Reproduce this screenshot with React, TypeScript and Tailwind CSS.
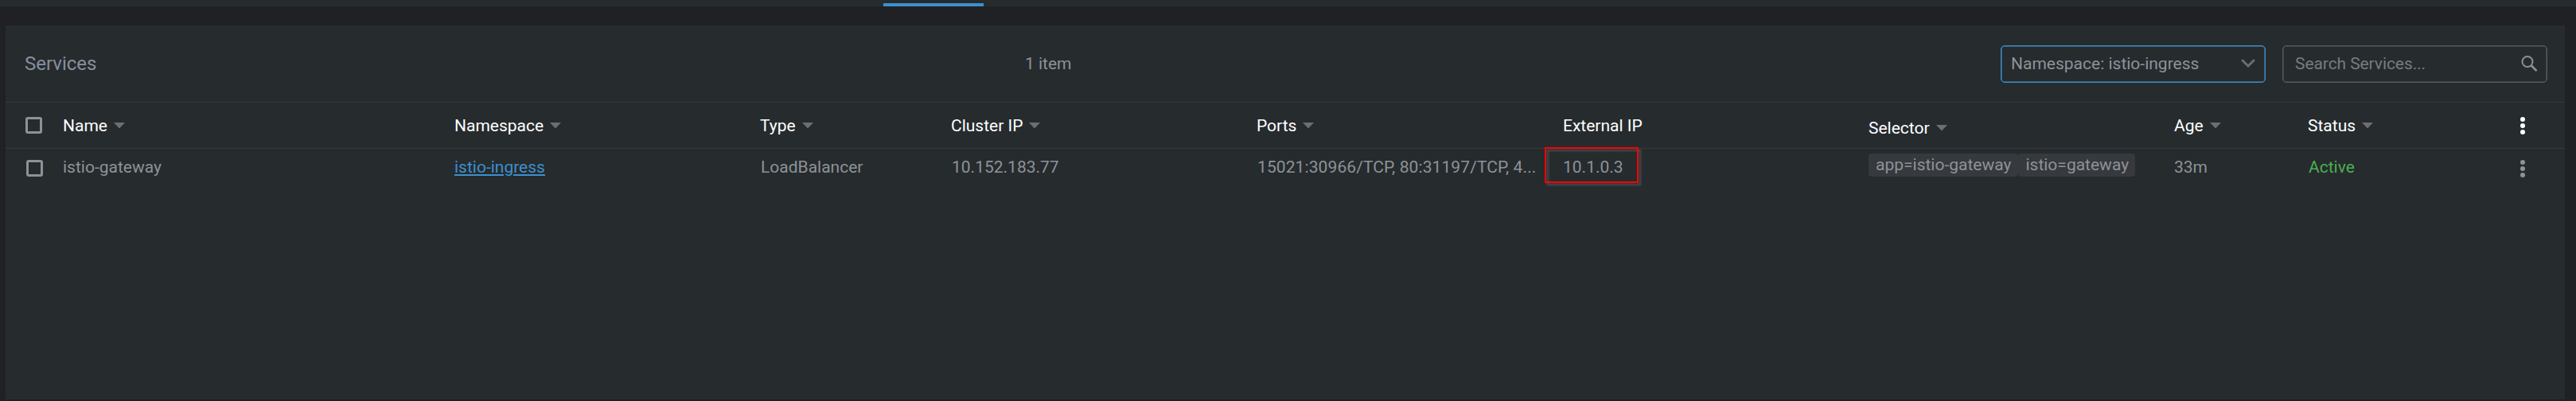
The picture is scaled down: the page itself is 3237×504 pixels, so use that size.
import React from "react";

const Caret = () => (
  <svg width="14" height="8" viewBox="0 0 14 8" className="shrink-0">
    <path d="M0 0h14L7 7.5z" fill="#6b6f72" />
  </svg>
);

const Box = ({ className = "" }: { className?: string }) => (
  <span className={`block h-[21px] w-[21px] shrink-0 rounded-[3px] border-[3px] border-[#8e9297] ${className}`} />
);

const Kebab = ({ fill }: { fill: string }) => (
  <svg width="6" height="24" viewBox="0 0 6 24" fill={fill} className="shrink-0">
    <circle cx="3" cy="4" r="3" />
    <circle cx="3" cy="12" r="3" />
    <circle cx="3" cy="20" r="3" />
  </svg>
);

const cols =
  "grid grid-cols-[72px_492px_384px_240px_384px_385px_384px_384px_168px_267px_49px]";

const Head = ({ label, caret = true, className = "" }: { label: string; caret?: boolean; className?: string }) => (
  <div className={`flex items-center gap-[8px] whitespace-nowrap text-white ${className}`}>
    <span>{label}</span>
    {caret && <Caret />}
  </div>
);

export default function App() {
  return (
    <div className="flex h-[504px] w-[3237px] flex-col overflow-hidden bg-[#202124] font-['Roboto',sans-serif] text-[21px] leading-[28px] text-[#8e9297]">
      <div className="flex h-[8px] items-end bg-[#262b2e] pl-[1110px]">
        <div className="h-[4px] w-[126px] bg-[#3d90ce]" />
      </div>
      <main className="ml-[7px] mt-[24px] flex h-[470px] w-[3216px] flex-col bg-[#262b2e]">
        <header className="flex h-[96px] items-center pr-[22px]">
          <h1 className="w-[1281px] pl-[24px] text-[24px] text-[#87909c]">Services</h1>
          <span>1 item</span>
          <div className="ml-auto flex gap-[21px]">
            <div className="flex h-[47px] w-[333px] items-center justify-between rounded-[5px] border-[1px] border-[#3d90ce] pl-[12px] pr-[12px] shadow-[inset_0_0_0_0.5px_#3d90ce]">
              <span>Namespace: istio-ingress</span>
              <svg width="18" height="12" viewBox="0 0 18 12" fill="none" stroke="#6b6f72" strokeWidth="3" strokeLinecap="round">
                <path d="M2 2l7 7 7-7" />
              </svg>
            </div>
            <div className="flex h-[47px] w-[333px] items-center justify-between rounded-[5px] border-[1px] border-[#555b65] pl-[15px] pr-[11px] shadow-[inset_0_0_0_0.5px_#555b65]">
              <span className="tracking-[-0.08px] text-[#777b80]">Search Services...</span>
              <svg width="21" height="21" viewBox="0 0 21 21" fill="none" stroke="#8e9297" strokeWidth="2">
                <circle cx="8" cy="7.5" r="6.5" />
                <path d="M12.5 12l7 7.2" strokeWidth="2.6" />
              </svg>
            </div>
          </div>
        </header>
        <div className={`${cols} h-[58px] items-center border-t border-[#36393e]`}>
          <Box className="ml-[25px]" />
          <Head label="Name" />
          <Head label="Namespace" />
          <Head label="Type" />
          <Head label="Cluster IP" />
          <Head label="Ports" />
          <Head label="External IP" caret={false} />
          <Head label="Selector" className="pt-[6px]" />
          <Head label="Age" />
          <Head label="Status" />
          <Kebab fill="#ffffff" />
        </div>
        <div className={`${cols} h-[50px] items-center border-t border-[#36393e]`}>
          <Box className="ml-[26px]" />
          <div className="pb-[4px]">istio-gateway</div>
          <div className="pb-[4px] text-[#3d90ce] underline">istio-ingress</div>
          <div className="pb-[4px] pl-px">LoadBalancer</div>
          <div className="pb-[4px] pl-px">10.152.183.77</div>
          <div className="whitespace-nowrap pb-[4px] pl-px tracking-[0.1px]">15021:30966/TCP, 80:31197/TCP, 4...</div>
          <div className="relative pb-[4px]">
            10.1.0.3
            <span className="absolute -left-[23px] -top-[11px] h-[45px] w-[118px] border-[2px] border-[#ff0000] [filter:drop-shadow(3px_3px_1px_#4f5152)]" />
          </div>
          <div className="flex pb-[8px]">
            <span className="h-[29px] rounded-[4px] bg-[#36393e] px-[9px] leading-[29px]">app=istio-gateway</span>
            <span className="h-[29px] rounded-[4px] bg-[#36393e] pl-[9px] pr-[8px] leading-[29px]">istio=gateway</span>
          </div>
          <div className="pb-[4px]">33m</div>
          <div className="pb-[4px] pl-px text-[#4caf50]">Active</div>
          <Kebab fill="#8e9297" />
        </div>
      </main>
    </div>
  );
}
